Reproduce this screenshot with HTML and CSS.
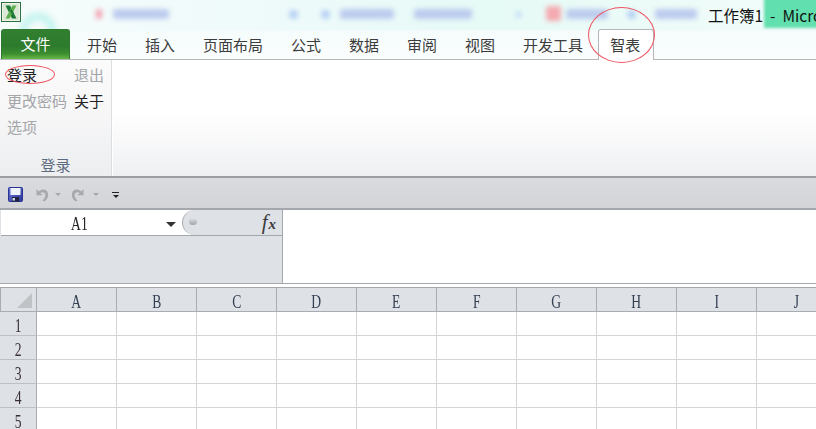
FILE: index.html
```html
<!DOCTYPE html>
<html lang="zh-CN">
<head>
<meta charset="utf-8">
<title>工作簿1 - Microsoft Excel</title>
<link rel="stylesheet" href="styles.css">
</head>
<body>
<div class="app">
  <header class="titlebar">
    <svg class="logo" viewBox="0 0 20 20" width="20" height="20" aria-hidden="true">
      <rect x="0.5" y="0.5" width="19" height="19" fill="#eef3ea" stroke="#2f7040"/>
      <rect x="2" y="2" width="16" height="16" fill="#dce8d6"/>
      <path d="M4.500 3.500h4.500l6.500 13h-4.500z" fill="#1d7a38"/>
      <path d="M11.500 3.500h4L8.500 16.500h-4z" fill="#5fae4e"/>
      <path d="M8.800 8.500l2.200-1 1.600 3.200-2.200 1z" fill="#1d7a38"/>
    </svg>
    <div class="blurs" aria-hidden="true">
      <span class="blob red b1"></span><span class="blob bar b2"></span>
      <span class="blob dot b3"></span><span class="blob dot b3b"></span><span class="blob bar b4"></span><span class="blob bar b5"></span>
      <span class="blob dot b6"></span><span class="blob pink b7"></span><span class="blob bar b8"></span>
      <span class="blob dot b9"></span><span class="blob bar b10"></span>
      <span class="ring"></span>
    </div>
    <div class="greenblock"></div>
    <div class="title">工作簿1 - Micro</div>
  </header>

  <nav class="tabs">
    <div class="tab-file">文件</div>
    <div class="tab">开始</div>
    <div class="tab">插入</div>
    <div class="tab">页面布局</div>
    <div class="tab">公式</div>
    <div class="tab">数据</div>
    <div class="tab">审阅</div>
    <div class="tab">视图</div>
    <div class="tab">开发工具</div>
    <div class="tab tab-active">智表</div>
  </nav>

  <section class="ribbon">
    <div class="group">
      <div class="group-items">
        <div class="cmd">登录</div>
        <div class="cmd off">退出</div>
        <div class="cmd off">更改密码</div>
        <div class="cmd">关于</div>
        <div class="cmd off">选项</div>
      </div>
      <div class="group-label">登录</div>
    </div>
  </section>

  <section class="qat">
    <svg class="qi save" viewBox="0 0 15 15" width="15" height="15" aria-hidden="true">
      <defs><linearGradient id="sv" x1="0" y1="0" x2="1" y2="1"><stop offset="0" stop-color="#6a78dc"/><stop offset="1" stop-color="#2c3596"/></linearGradient></defs>
      <rect x="0.500" y="0.500" width="14" height="14" rx="1" fill="url(#sv)" stroke="#2a3390"/>
      <rect x="2.500" y="1" width="10" height="7" fill="#eef3fb"/>
      <rect x="4" y="10" width="7" height="4.500" fill="#1d2340"/>
      <rect x="4.500" y="11" width="2.500" height="2.500" fill="#cfd6e8"/>
    </svg>
    <svg class="qi undo" viewBox="0 0 14 14" width="14" height="14" aria-hidden="true">
      <path d="M1.500 1v6.200h6.200L5.300 4.900C7 3.800 9.800 4.200 10.300 6.500c.4 2-.8 4-2.800 6l2 1c2.700-2 4.200-5 3.500-8C12.200 1.300 7.600.2 3.900 3.400z" fill="#a6a9ad"/>
    </svg>
    <i class="caret small gap1"></i>
    <svg class="qi redo" viewBox="0 0 14 14" width="14" height="14" aria-hidden="true">
      <path d="M12.500 1v6.200H6.300l2.400-2.300C7 3.800 4.200 4.200 3.700 6.500c-.4 2 .8 4 2.800 6l-2 1C1.800 11.500.3 8.500 1 5.500 1.800 1.300 6.400.2 10.100 3.400z" fill="#a6a9ad"/>
    </svg>
    <i class="caret small gap2"></i>
    <span class="custom"><b></b><i class="caret dark"></i></span>
  </section>

  <section class="formula">
    <div class="fleft">
      <div class="namerow">
        <div class="namebox"><span class="g">A1</span></div>
        <i class="caret name"></i>
        <div class="fxbox">
          <span class="knob"></span>
          <span class="fx">f<span class="fx-x">x</span></span>
        </div>
      </div>
    </div>
    <div class="fright"></div>
  </section>

  <section class="sheet">
    <div class="cell corner"><svg viewBox="0 0 15 15" width="15" height="15" aria-hidden="true"><path d="M0 15L15 0v15z" fill="#bfc3c6"/></svg></div>
    <div class="cell ch"><span class="g">A</span></div><div class="cell ch"><span class="g">B</span></div><div class="cell ch"><span class="g">C</span></div><div class="cell ch"><span class="g">D</span></div><div class="cell ch"><span class="g">E</span></div><div class="cell ch"><span class="g">F</span></div><div class="cell ch"><span class="g">G</span></div><div class="cell ch"><span class="g">H</span></div><div class="cell ch"><span class="g">I</span></div><div class="cell ch"><span class="g">J</span></div>
    <div class="cell rh"><span class="g">1</span></div><div class="cell"></div><div class="cell"></div><div class="cell"></div><div class="cell"></div><div class="cell"></div><div class="cell"></div><div class="cell"></div><div class="cell"></div><div class="cell"></div><div class="cell"></div>
    <div class="cell rh"><span class="g">2</span></div><div class="cell"></div><div class="cell"></div><div class="cell"></div><div class="cell"></div><div class="cell"></div><div class="cell"></div><div class="cell"></div><div class="cell"></div><div class="cell"></div><div class="cell"></div>
    <div class="cell rh"><span class="g">3</span></div><div class="cell"></div><div class="cell"></div><div class="cell"></div><div class="cell"></div><div class="cell"></div><div class="cell"></div><div class="cell"></div><div class="cell"></div><div class="cell"></div><div class="cell"></div>
    <div class="cell rh"><span class="g">4</span></div><div class="cell"></div><div class="cell"></div><div class="cell"></div><div class="cell"></div><div class="cell"></div><div class="cell"></div><div class="cell"></div><div class="cell"></div><div class="cell"></div><div class="cell"></div>
    <div class="cell rh"><span class="g">5</span></div><div class="cell"></div><div class="cell"></div><div class="cell"></div><div class="cell"></div><div class="cell"></div><div class="cell"></div><div class="cell"></div><div class="cell"></div><div class="cell"></div><div class="cell"></div>
  </section>

  <span class="mark mark-login"></span>
  <span class="mark mark-tab"></span>
</div>
</body>
</html>
```
FILE: styles.css
```css
* { box-sizing: border-box; }
html, body { margin: 0; padding: 0; background: #fff; }
.app {
  position: relative;
  width: 816px;
  height: 429px;
  overflow: hidden;
  font-family: "Noto Sans CJK SC", "Noto Sans", sans-serif;
  color: #333;
}

/* title bar */
.titlebar {
  position: relative;
  height: 30px;
  display: flex;
  overflow: hidden;
  background: linear-gradient(90deg, #f6fcfb 0%, #effafb 30%, #e6faf6 60%, #f2fcfa 100%);
}
.logo { margin: 2px 0 0 1px; flex: none; position: relative; z-index: 1; }
.blurs { position: absolute; inset: 0; }
.blob { position: absolute; filter: blur(2.5px); border-radius: 3px; }
.bar { background: #bccbee; height: 10px; top: 9px; }
.dot { background: #b4cff4; width: 9px; height: 9px; top: 10px; border-radius: 50%; }
.red { background: #f2a0ae; width: 6px; height: 10px; top: 9px; left: 96px; }
.pink { background: #f4aab0; width: 15px; height: 15px; top: 6px; left: 546px; }
.b2 { left: 113px; width: 56px; }
.b3 { left: 289px; }
.b3b { left: 321px; }
.b4 { left: 340px; width: 54px; }
.b5 { left: 414px; width: 58px; }
.b6 { left: 516px; width: 5px; height: 5px; top: 12px; }
.b8 { left: 566px; width: 42px; }
.b9 { left: 627px; }
.b10 { left: 655px; width: 42px; }
.ring {
  position: absolute;
  left: 20px;
  top: 13px;
  width: 36px;
  height: 36px;
  border: 7px solid #bff3ee;
  border-radius: 50%;
  filter: blur(3px);
}
.greenblock {
  position: absolute;
  left: 764px;
  top: -6px;
  right: -6px;
  height: 34px;
  background: #62dfae;
  filter: blur(1.5px);
}
.title {
  position: absolute;
  left: 708px;
  top: 3px;
  font-size: 15.500px;
  line-height: 24px;
  word-spacing: 3.500px;
  color: #111;
  white-space: nowrap;
}

/* tabs */
.tabs {
  position: relative;
  height: 30px;
  display: flex;
  align-items: flex-end;
  background: linear-gradient(180deg, #f4fcfb, #fcfefe);
  border-bottom: 1px solid #b4b6b9;
  padding-left: 1px;
}
.tab-file {
  width: 69px;
  height: 30px;
  border: 1px solid #2f7a30;
  border-bottom: 0;
  border-radius: 3px 3px 0 0;
  background: linear-gradient(180deg, #327f30 0%, #2c7a2c 55%, #3c8e30 82%, #69b948 100%);
  color: #fff;
  font-size: 15px;
  line-height: 28px;
  text-align: center;
}
.tab {
  padding: 0 14px;
  height: 29px;
  font-size: 15px;
  line-height: 29px;
  color: #3c3c3c;
  white-space: nowrap;
}
.tab-file + .tab { margin-left: 3px; }
.tab-active {
  width: 56px;
  height: 31px;
  margin-left: 1px;
  margin-bottom: -1px;
  padding: 0 11px;
  background: #fff;
  border: 1px solid #b4b6b9;
  border-bottom: 0;
  border-radius: 3px 3px 0 0;
}

/* ribbon */
.ribbon {
  height: 118px;
  display: flex;
  background: linear-gradient(180deg, #fff 0%, #fff 45%, #eff0f2 100%);
  border-bottom: 2px solid #9a9da1;
}
.group {
  width: 112px;
  display: flex;
  flex-direction: column;
  background: linear-gradient(180deg, #fbfbfc 0%, #f6f6f7 50%, #eceef0 100%);
  border-right: 1px solid #dcdee1;
  box-shadow: 1px 0 0 #fff;
}
.group-items {
  display: grid;
  grid-template-columns: 67px auto;
  grid-auto-rows: 26px;
  padding: 2px 0 0 7px;
  height: 95px;
  font-size: 15px;
  line-height: 26px;
  color: #222;
}
.cmd { white-space: nowrap; }
.off { color: #a3a5a8; }
.group-label {
  text-align: center;
  font-size: 15px;
  line-height: 20px;
  color: #5d6b80;
}

/* quick access */
.qat {
  height: 32px;
  display: flex;
  align-items: center;
  padding: 3px 0 0 8px;
  background: linear-gradient(180deg, #d9dbde, #d2d4d8);
  border-bottom: 2px solid #a4a7ab;
}
.qi { flex: none; }
.undo { margin-left: 12px; }
.redo { margin-left: 10px; }
.caret {
  display: block;
  width: 0;
  height: 0;
  border-left: 3px solid transparent;
  border-right: 3px solid transparent;
  border-top: 3px solid #a4a7ab;
}
.small { flex: none; }
.gap1 { margin-left: 6px; }
.gap2 { margin-left: 8px; }
.custom {
  display: flex;
  flex-direction: column;
  align-items: center;
  gap: 2px;
  margin-left: 13px;
}
.custom b { display: block; width: 7px; height: 1px; background: #222; }
.caret.dark { border-top: 3px solid #222; border-left-width: 3.500px; border-right-width: 3.500px; }

/* narrow, tall sheet lettering */
.g {
  display: inline-block;
  transform: scale(0.8, 1.12);
}

/* formula bar */
.formula {
  height: 74px;
  display: flex;
  background: #fff;
  border-bottom: 1px solid #a4a7ab;
}
.fleft {
  width: 283px;
  background: #dee1e6;
  border-right: 1px solid #a4a7ab;
  padding-left: 1px;
}
.fright { flex: 1; }
.namerow {
  position: relative;
  display: flex;
  height: 26px;
  background: #fff;
  border-bottom: 1px solid #a4a7ab;
}
.namebox {
  width: 181px;
  padding: 2px 25px 0 0;
  text-align: center;
  font-family: "Liberation Serif", serif;
  font-size: 17px;
  line-height: 24px;
  color: #222;
}
.caret.name {
  position: absolute;
  left: 165px;
  top: 12px;
  border-left-width: 5px;
  border-right-width: 5px;
  border-top: 5px solid #333;
}
.fxbox {
  position: relative;
  flex: 1;
  background: #dee1e6;
  border-left: 1px solid #a9acb0;
  border-radius: 13px 0 0 13px;
}
.knob {
  position: absolute;
  left: 6px;
  top: 8px;
  width: 8px;
  height: 7px;
  border-radius: 50%;
  background: linear-gradient(180deg, #e2e4e7, #9ea1a5);
}
.fx {
  position: absolute;
  right: 6px;
  top: 0;
  display: flex;
  align-items: baseline;
  font-family: "Liberation Serif", serif;
  font-style: italic;
  font-size: 21px;
  line-height: 24px;
  color: #3a3a3a;
}
.fx-x { font-size: 15px; font-weight: bold; margin-left: 1px; }

/* sheet */
.sheet {
  margin-top: 3px;
  display: grid;
  grid-template-columns: 37px repeat(10, 80px);
  grid-template-rows: 24px repeat(5, 24px);
  border-top: 1px solid #a4a7ab;
}
.cell {
  border-right: 1px solid #d4d4d4;
  border-bottom: 1px solid #d4d4d4;
  background: #fff;
}
.ch, .rh, .corner {
  background: #dee1e6;
  border-color: #a9acb0;
  font-family: "Liberation Serif", serif;
  font-size: 17px;
  line-height: 23px;
  padding-top: 2px;
  text-align: center;
  color: #333f52;
}
.rh { color: #3a2f36; border-bottom-color: #bcbfc3; }
.corner {
  display: flex;
  align-items: flex-end;
  justify-content: flex-end;
  padding: 0 4px 3px 0;
  border-left: 1px solid #a9acb0;
}

/* red annotations */
.mark {
  position: absolute;
  border: 1px solid #ee5560;
  border-radius: 50%;
}
.mark-login { left: 5px; top: 65px; width: 50px; height: 19px; }
.mark-tab { left: 588px; top: 7px; width: 67px; height: 56px; }
```
